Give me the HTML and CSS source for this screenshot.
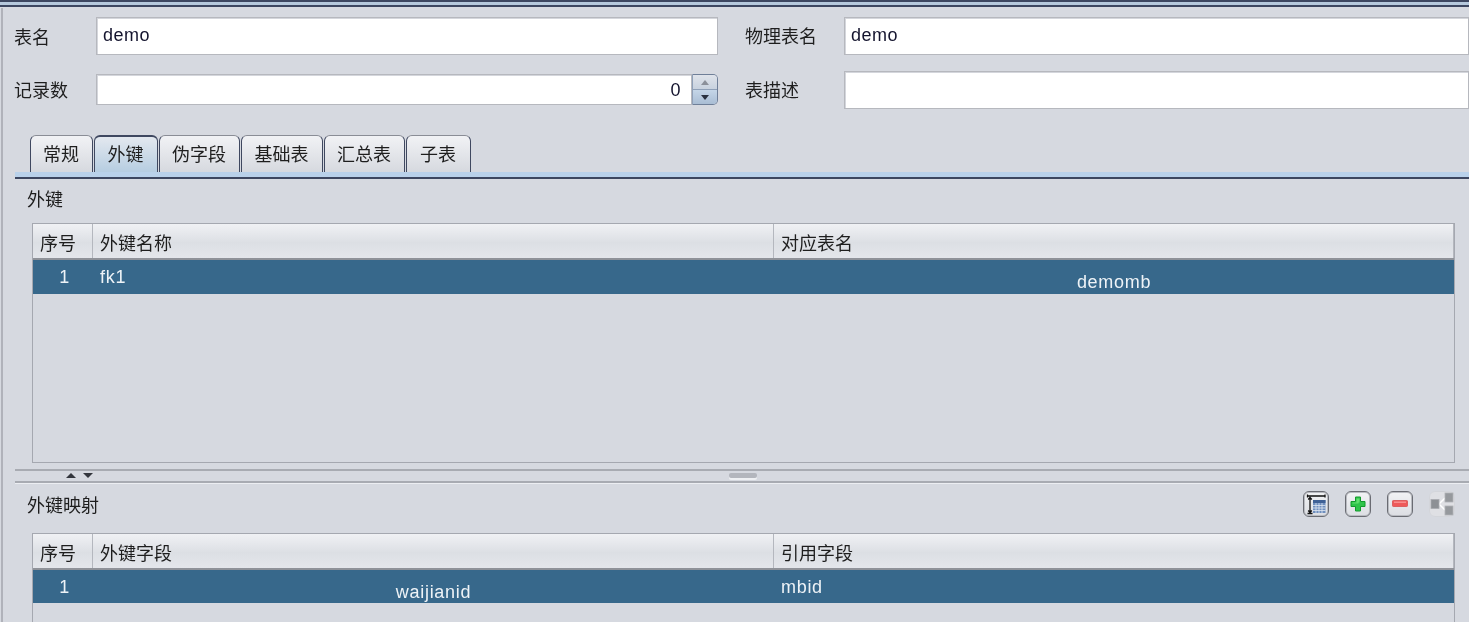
FILE: index.html
```html
<!DOCTYPE html>
<html lang="zh">
<head>
<meta charset="utf-8">
<title>表</title>
<link rel="stylesheet" href="styles.css">
</head>
<body>
<div class="topbar"></div>
<main class="page">
  <form class="form">
    <label class="lbl">表名</label>
    <div class="input tall">demo</div>
    <label class="lbl right raised">物理表名</label>
    <div class="input tall">demo</div>
    <label class="lbl raised">记录数</label>
    <div class="spin">
      <div class="input num">0</div>
      <div class="spin-btns">
        <span class="spin-up"><i class="tri-up"></i></span>
        <span class="spin-down"><i class="tri-down"></i></span>
      </div>
    </div>
    <label class="lbl right raised">表描述</label>
    <div class="input tall"></div>
  </form>

  <nav class="tabs">
    <span class="tab t1">常规</span>
    <span class="tab t2 active">外键</span>
    <span class="tab t3">伪字段</span>
    <span class="tab t3b">基础表</span>
    <span class="tab t3">汇总表</span>
    <span class="tab t4">子表</span>
  </nav>
  <div class="tabline"></div>

  <section class="upper">
    <h2 class="title">外键</h2>
    <div class="table first">
      <div class="thead">
        <span class="th">序号</span><span class="th">外键名称</span><span class="th">对应表名</span>
      </div>
      <div class="row">
        <span class="td idx">1</span><span class="td">fk1</span><span class="td mid">demomb</span>
      </div>
    </div>
  </section>

  <div class="splitter">
    <div class="arrows"><i class="tri-up dark"></i><i class="tri-down dark"></i></div>
    <div class="grip"></div>
  </div>

  <section class="lower">
    <div class="bar">
      <h2 class="title">外键映射</h2>
      <div class="tools">
        <button class="tool" type="button" aria-label="列宽">
          <svg width="24" height="24" viewBox="0 0 24 24">
            <path d="M4 4h17M3.500 2.500v3M21 2.500v3M6 6v14M4.200 7.500 6 5.500 7.800 7.500M4.200 18.500 6 20.500 7.800 18.500M3.500 21.500h5" fill="none" stroke="#111" stroke-width="1.300"/>
            <rect x="9" y="8" width="12.500" height="13" fill="#6f8fbe"/>
            <rect x="9" y="8" width="12.500" height="3" fill="#3f6196"/>
            <path d="M9 13.500h12.500M9 16h12.500M9 18.500h12.500M12 11v10M15 11v10M18 11v10" stroke="#dfe7f2" stroke-width=".8"/>
          </svg>
        </button>
        <button class="tool" type="button" aria-label="添加">
          <svg width="24" height="24" viewBox="0 0 24 24">
            <path d="M9.500 5h5v4.500H19v5h-4.500V19h-5v-4.500H5v-5h4.500z" fill="#2fc44a" stroke="#129a2c" stroke-width="1"/>
            <path d="M10.500 6.500h3v4h-3zM6.500 10.500h6v1h-6z" fill="#63e070"/>
          </svg>
        </button>
        <button class="tool" type="button" aria-label="删除">
          <svg width="24" height="24" viewBox="0 0 24 24">
            <rect x="4.500" y="8.500" width="15" height="6" rx=".8" fill="#ee5a5a" stroke="#d84f4f" stroke-width=".8"/>
            <rect x="6" y="9.500" width="12" height="1.500" fill="#f78f8f"/>
          </svg>
        </button>
        <button class="tool off" type="button" aria-label="关系">
          <svg width="24" height="24" viewBox="0 0 24 24">
            <path d="M9 12 15 6M9 12l6 6" stroke="#fff" stroke-width="1.500" fill="none"/>
            <rect x="1" y="7.500" width="8" height="9" fill="#8d9095" stroke="#a9abb0" stroke-width=".8"/>
            <rect x="15" y="1" width="8" height="9" fill="#96999d" stroke="#b0b2b6" stroke-width=".8"/>
            <rect x="15" y="14" width="8" height="9" fill="#96999d" stroke="#b0b2b6" stroke-width=".8"/>
          </svg>
        </button>
      </div>
    </div>
    <div class="table second">
      <div class="thead">
        <span class="th">序号</span><span class="th">外键字段</span><span class="th">引用字段</span>
      </div>
      <div class="row">
        <span class="td idx">1</span><span class="td mid">waijianid</span><span class="td">mbid</span>
      </div>
    </div>
  </section>
</main>
</body>
</html>
```

FILE: styles.css
```css
* { box-sizing: border-box; }
html, body { margin: 0; height: 622px; overflow: hidden; background: #d6d9e0; }
body {
  color: #1e1e1e;
  font: 18px/24px "Noto Sans CJK SC", "Liberation Sans", sans-serif;
}
.topbar {
  height: 7px;
  background: #b5c8dc;
  border-top: 2px solid #3c4660;
  border-bottom: 2px solid #3c4660;
  filter: blur(.5px);
}
.page {
  height: 614px;
  margin: 1px 0 0 1px;
  border-left: 2px solid #b0b2ba;
  padding-top: 9px;
  overflow: hidden;
  filter: blur(.5px);
}
.form {
  display: grid;
  grid-template-columns: 82px 622px 126px 1fr;
  grid-template-rows: 38px 38px;
  row-gap: 16px;
  padding-left: 11px;
  align-items: center;
}
.lbl { font-size: 18px; }
.raised { padding-bottom: 2px; }
.right { padding-left: 27px; }
.input {
  background: #fff;
  border: 1px solid #b6b8be;
  box-shadow: inset 1px 1px 0 #d4d6dc;
  font: 18px/34px "Liberation Sans", sans-serif;
  letter-spacing: .5px;
  padding-left: 6px;
  color: #14142e;
}
.tall { height: 38px; }
.spin { display: flex; height: 31px; align-self: start; margin-top: 3px; }
.input.num { flex: 1; height: 31px; text-align: right; padding: 0 10px 0 0; line-height: 30px; }
.spin-btns {
  width: 26px;
  display: flex;
  flex-direction: column;
  border: 1px solid #6f7f98;
  border-left-color: #8fa0b8;
  border-radius: 0 5px 5px 0;
  overflow: hidden;
}
.spin-up, .spin-down { flex: 1; display: flex; align-items: center; justify-content: center; }
.spin-up { background: linear-gradient(#dfe3ea, #c8d2df); border-bottom: 1px solid #8fa0b8; }
.spin-down { background: linear-gradient(#c5d6e8, #a9bdd4); }
.tri-up, .tri-down { display: block; width: 0; height: 0; border-left: 4px solid transparent; border-right: 4px solid transparent; }
.tri-up { border-bottom: 5px solid #8b909a; }
.tri-down { border-top: 5px solid #2a3140; }
.tabs {
  display: flex;
  align-items: flex-end;
  gap: 1px;
  height: 38px;
  margin: 25px 0 0 27px;
}
.tab {
  height: 37px;
  display: flex;
  align-items: center;
  justify-content: center;
  padding: 0 1px 3px 0;
  background: linear-gradient(#f1f2f5, #d6d9df);
  border: 1px solid #3f4860;
  border-top-color: #8a8d96;
  border-bottom: 0;
  border-radius: 6px 6px 0 0;
}
.t1 { width: 63px; }
.t2 { width: 64px; }
.t3 { width: 81px; }
.t3b { width: 82px; }
.t4 { width: 65px; }
.active { background: linear-gradient(#e3e8ef, #b6cde1); border-top: 2px solid #3f4860; }
.tabline {
  height: 7px;
  margin-left: 12px;
  background: #b9d1ea;
  border-bottom: 2px solid #3c4660;
}
.upper { height: 290px; padding: 7px 0 0 24px; }
.title { margin: 0; font-size: 18px; font-weight: 400; line-height: 24px; }
.table {
  margin: 13px 14px 0 5px;
  border: 1px solid #a5a8b0;
}
.first { height: 240px; }
.second { height: 89px; margin-top: 17px; border-bottom: 0; }
.thead {
  display: grid;
  grid-template-columns: 60px 681px 1fr;
  grid-template-rows: 34px;
  height: 36px;
  background: linear-gradient(#f0f1f4, #dcdfe4 55%, #e4e6eb);
  border-bottom: 2px solid #8f9299;
}
.th { padding-left: 7px; line-height: 36px; border-right: 1px solid #b4b7be; }
.row {
  display: grid;
  grid-template-columns: 60px 681px 1fr;
  grid-template-rows: 33px;
  height: 33px;
  background: #37688b;
  color: #eef3f7;
  font: 18px/35px "Liberation Sans", sans-serif;
  letter-spacing: .7px;
}
.first .row { height: 34px; grid-template-rows: 34px; }
.td { padding-left: 7px; }
.idx { text-align: center; padding: 0 0 0 3px; }
.mid { text-align: center; padding: 5px 0 0; }
.splitter {
  position: relative;
  height: 14px;
  margin-left: 12px;
  border-top: 2px solid #a8abb2;
  border-bottom: 2px solid #a8abb2;
  box-shadow: 0 1px 0 #eceef2;
}
.arrows { display: flex; gap: 7px; margin-left: 51px; padding-top: 2px; }
.tri-up.dark, .tri-down.dark { border-left-width: 5px; border-right-width: 5px; }
.tri-up.dark { border-bottom: 5px solid #33363d; }
.tri-down.dark { border-top: 5px solid #33363d; }
.grip {
  position: absolute;
  left: 714px;
  top: 2px;
  width: 28px;
  height: 5px;
  background: #b3b6bd;
  box-shadow: 0 2px 0 #eef0f3;
  border-radius: 2px;
}
.lower { padding: 9px 0 0 24px; }
.bar { display: flex; justify-content: space-between; align-items: center; height: 24px; }
.tools { display: flex; gap: 16px; margin-right: 14px; }
.tool {
  flex: none;
  width: 26px;
  height: 26px;
  padding: 0;
  display: flex;
  align-items: center;
  justify-content: center;
  background: linear-gradient(#f2f3f5, #dcdee3);
  border: 1px solid #6a6c73;
  box-shadow: inset 0 0 0 1px #b9bbc1;
  border-radius: 6px;
}
.tool svg { flex: none; display: block; }
.off { border-color: #d3d5da; box-shadow: none; background: #dfe0e4; }
```
